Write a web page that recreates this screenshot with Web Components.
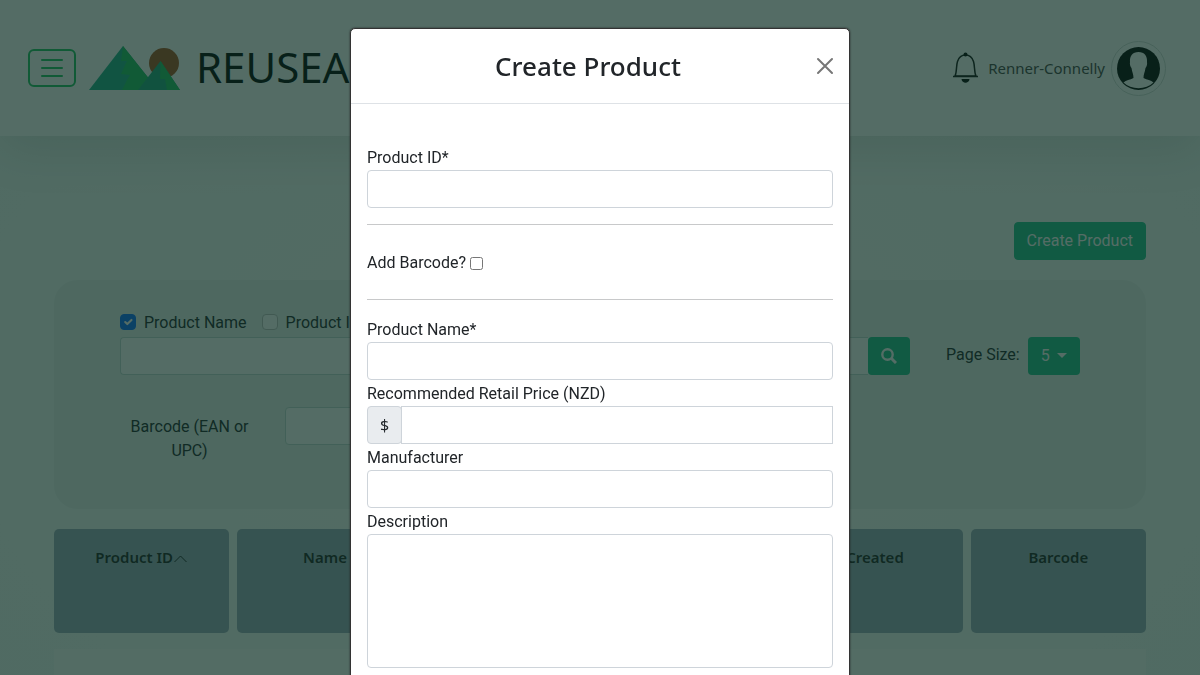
<!DOCTYPE html>
<html lang="en">
<head>
<meta charset="utf-8">
<meta name="viewport" content="width=device-width, initial-scale=1">
<title>Product catalogue</title>
<style>
body {
  margin: 0; overflow: hidden; min-height: 100vh;
  font: 16px/24px Roboto, "Liberation Sans", sans-serif; color: #212529;
  background: radial-gradient(ellipse at center, #fafdfb 0%, #f6fbf8 50%, #f0f9f6 100%);
  --heading-font: "Noto Sans", "Open Sans", sans-serif;
  --brand: #1ec18c; --outline: #1ec162; --line: #ced4da;
}
</style>
</head>
<body>
<app-header user="Renner-Connelly"></app-header>
<catalogue-page>
  <search-panel></search-panel>
  <product-table></product-table>
</catalogue-page>
<modal-dialog heading="Create Product">
  <product-form></product-form>
</modal-dialog>

<script>
const define = (name, html, setup) => {
  const template = document.createElement('template');
  template.innerHTML = '<style>*,*::before,*::after{box-sizing:border-box}:host{display:block}input,button,select,textarea{font:inherit;color:inherit;margin:0}</style>' + html;
  customElements.define(name, class extends HTMLElement {
    constructor() {
      super();
      this.attachShadow({ mode: 'open' }).append(template.content.cloneNode(true));
    }
    connectedCallback() { if (setup) setup(this, this.shadowRoot); }
  });
};

define('brand-logo', `
<style>
a { display: flex; align-items: center; gap: 16px; color: #000; text-decoration: none; font: 42px/56px var(--heading-font); }
svg { display: block; }
span { padding-bottom: 2px; }
</style>
<a href="#home">
  <svg width="91" height="46" viewBox="0 0 91 46" aria-hidden="true">
    <circle cx="75" cy="18" r="15" fill="#a8501f"/>
    <path d="M0 45 34 1 69 45Z" fill="#20b08b"/>
    <path d="M34 1 69 45H33L38 35 41 30 32 29 36 20 38 16 32 16Z" fill="#1ec162"/>
    <path d="M49 45 71.500 16 91 45Z" fill="#20a97f"/>
    <path d="M71.500 16 91 45H78L76 34 71 34Z" fill="#1ec162"/>
  </svg>
  <span>REUSEABILITY</span>
</a>`);

define('user-menu', `
<style>
:host { display: flex; align-items: center; color: #000; }
button { border: 0; padding: 0; background: none; display: block; color: #111; }
svg { display: block; }
.name { margin: 0 6px 0 9px; color: #444; text-decoration: none; font: 15px/24px var(--heading-font); }
.avatar { border: 1px solid #d3dbd8; border-radius: 50%; padding: 5px; color: #000; }
</style>
<button aria-label="Notifications">
  <svg width="27" height="32" viewBox="0 0 27 32">
    <path d="M3 24C5 20 4 14 5.500 9.500 6.800 5.500 9.500 3 13.500 3S20.200 5.500 21.500 9.500C23 14 22 20 24 24Z" fill="none" stroke="currentColor" stroke-width="1.500"/>
    <path d="M1 24.500H26" stroke="currentColor" stroke-width="1.500"/>
    <circle cx="13.500" cy="2.500" r="2"/><path d="M9.500 27H17.500C17 32 10 32 9.500 27Z"/>
  </svg>
</button>
<a class="name" href="#profile"></a>
<button class="avatar" aria-label="Account">
  <svg width="43" height="43" viewBox="0 0 43 43">
    <circle cx="21.500" cy="21.500" r="21.500"/>
    <path d="M21.500 5C15.500 5 12.500 9 13 15C12.500 17 13.500 20 14.500 21C15 25 16.500 27 16.500 31C13 33 9 33 6.500 35.500C14 43 29 43 36.500 35.500C34 33 30 33 26.500 31C26.500 27 28 25 28.500 21C29.500 20 30.500 17 30 15C30.500 9 27.500 5 21.500 5Z" fill="#fff"/>
  </svg>
</button>`, (host, root) => { root.querySelector('.name').textContent = host.getAttribute('user'); });

define('app-header', `
<style>
:host { position: relative; background: #fff; box-shadow: 0 16px 48px rgba(0,0,0,.1); }
header { display: flex; align-items: center; gap: 13px; height: 136px; padding: 0 34px 0 28px; }
.menu { width: 48px; height: 38px; padding: 0; display: grid; place-items: center; border: 2px solid var(--outline); border-radius: 6px; background: none; color: var(--outline); }
user-menu { margin-left: auto; }
</style>
<header>
  <button class="menu" aria-label="Open menu">
    <svg width="22" height="18" viewBox="0 0 22 18"><path d="M1 1H21M1 9H21M1 17H21" stroke="currentColor" stroke-width="2" stroke-linecap="round"/></svg>
  </button>
  <brand-logo></brand-logo>
  <user-menu></user-menu>
</header>`, (host, root) => { root.querySelector('user-menu').setAttribute('user', host.getAttribute('user')); root.querySelector('user-menu').connectedCallback(); });

define('catalogue-page', `
<style>
main { padding: 86px 54px 0; }
.actions { display: flex; justify-content: flex-end; margin-bottom: 20px; }
button { height: 38px; padding: 0 12px; border: 1px solid var(--brand); border-radius: 4px; background: var(--brand); color: #fff; }
</style>
<main>
  <div class="actions"><button>Create Product</button></div>
  <slot></slot>
</main>`);

define('search-panel', `
<style>
form { display: grid; grid-template-columns: 790px 1fr; column-gap: 36px; padding: 30px 66px 46px; border-radius: 24px; background: #e9f1ee; }
.fields { display: flex; gap: 15px; height: 27px; }
.fields label { display: flex; gap: 8px; height: 25px; line-height: 26px; }
input[type=checkbox] { appearance: none; width: 16px; height: 16px; margin-top: 4px; border: 1px solid #bfbfbf; border-radius: 4px; background: #fff; }
input[type=checkbox]:checked { border-color: #0d6efd; background: #0d6efd url("data:image/svg+xml,%3Csvg xmlns='http://www.w3.org/2000/svg' viewBox='0 0 20 20'%3E%3Cpath fill='none' stroke='%23fff' stroke-linecap='round' stroke-linejoin='round' stroke-width='3' d='M6 10l3 3l6-6'/%3E%3C/svg%3E") center / 100%; }
.text { width: 100%; height: 38px; padding: 6px 12px; border: 1px solid #c4d8d2; border-radius: 4px; background: #fff; }
.query { display: flex; }
.query .text { flex: 1; min-width: 0; border-right: 0; border-radius: 4px 0 0 4px; }
.query button { width: 42px; height: 38px; padding: 0; display: grid; place-items: center; border: 0; border-radius: 4px; background: var(--brand); color: #fff; }
.size { display: flex; align-items: center; gap: 8px; margin-top: 27px; height: 38px; }
.size label { height: 26px; }
.picker { position: relative; }
.picker::after { content: ""; position: absolute; right: 13px; top: 16px; border: 5px solid transparent; border-top-color: #fff; border-bottom: 0; pointer-events: none; }
select { appearance: none; width: 52px; height: 38px; padding: 0 13px; border: 0; border-radius: 4px; background: var(--brand); color: #fff; }
.barcode { display: grid; grid-template-columns: 139px 1fr 1fr; gap: 26px; margin-top: 32px; }
.barcode label { padding-top: 8px; text-align: center; }
</style>
<form>
  <div>
    <div class="fields">
      <label><input type="checkbox" checked>Product Name</label>
      <label><input type="checkbox">Product ID</label>
    </div>
    <div class="query">
      <input class="text" type="search" aria-label="Search products">
      <button type="button" aria-label="Search"><svg width="16" height="16" viewBox="0 0 16 16"><circle cx="6.500" cy="6.500" r="5.200" fill="none" stroke="currentColor" stroke-width="2.400"/><path d="M10.500 10.500 15 15" stroke="currentColor" stroke-width="3"/></svg></button>
    </div>
  </div>
  <div class="size">
    <label for="size">Page Size:</label>
    <span class="picker"><select id="size"><option>5</option><option>10</option><option>25</option></select></span>
  </div>
  <div class="barcode">
    <label for="barcode">Barcode (EAN or UPC)</label>
    <input class="text" id="barcode">
  </div>
</form>`);

define('product-table', `
<style>
:host { margin-top: 20px; }
table, thead, tbody { display: block; }
thead tr { display: grid; grid-template-columns: repeat(6, 1fr); gap: 8px; }
th { height: 104px; padding: 16px 8px; border-radius: 5px; background: #9cacbc; color: #1c1f22; font: 600 15px/24px var(--heading-font); }
svg { vertical-align: -1px; }
tbody { margin-top: 16px; min-height: 120px; background: #fff; opacity: .6; }
</style>
<table>
  <thead><tr>
    <th>Product ID<svg width="15" height="10" viewBox="0 0 15 10"><path d="M1.500 8 7.500 2 13.500 8" fill="none" stroke="currentColor"/></svg></th>
    <th>Name</th><th>RRP</th><th>Maker</th><th>Created</th><th>Barcode</th>
  </tr></thead>
  <tbody></tbody>
</table>`);

define('modal-dialog', `
<style>
:host { position: fixed; inset: 0; overflow: hidden; background: rgba(12,45,35,.7); }
dialog { position: static; width: 100%; max-width: 500px; height: auto; max-height: none; margin: 28px auto; padding: 0; border: 1px solid #333; border-radius: 5px; background: #fff; color: inherit; box-shadow: 0 0 2px #222; }
header { display: grid; grid-template-columns: 8px 1fr 32px; align-items: center; padding: 16px 8px; border-bottom: 1px solid #dee2e6; }
h2 { grid-column: 2; margin: 0; text-align: center; font: 500 26px/42px var(--heading-font); }
button { align-self: start; width: 32px; height: 42px; padding: 0; display: grid; place-items: center; border: 0; background: none; color: #777; }
section { padding: 16px; }
</style>
<dialog open aria-labelledby="title">
  <header><h2 id="title"></h2>
    <button aria-label="Close"><svg width="18" height="18" viewBox="0 0 18 18"><path d="M2 2 16 16M16 2 2 16" stroke="currentColor" stroke-width="2" stroke-linecap="round"/></svg></button>
  </header>
  <section><slot></slot></section>
</dialog>`, (host, root) => { root.querySelector('h2').textContent = host.getAttribute('heading'); });

define('form-field', `
<style>
label { display: block; padding-top: 2px; }
.control { display: flex; }
.prefix { display: grid; place-items: center; width: 35px; border: 1px solid var(--line); border-radius: 4px; background: #e9ecef; font-family: var(--heading-font); }
.prefix:empty { display: none; }
input, textarea { display: block; flex: 1; min-width: 0; height: 38px; padding: 6px 12px; border: 1px solid var(--line); border-radius: 4px; background: #fff; }
textarea { height: 134px; resize: none; }
.prefix:not(:empty) + input { margin-left: -1px; border-radius: 0; }
</style>
<label for="control"></label>
<div class="control"><span class="prefix"></span></div>`, (host, root) => {
  root.querySelector('label').textContent = host.getAttribute('label');
  root.querySelector('.prefix').textContent = host.getAttribute('prefix-text') || '';
  const control = document.createElement(host.hasAttribute('multiline') ? 'textarea' : 'input');
  control.id = 'control';
  root.querySelector('.control').append(control);
});

define('product-form', `
<style>
form { padding-top: 24px; }
hr { height: 1px; margin: 16px 0; border: 0; background: #c8c9ca; }
.toggle { display: flex; align-items: center; gap: 4px; height: 42px; padding-top: 2px; }
.toggle input { width: 13px; height: 13px; }
</style>
<form>
  <form-field label="Product ID*"></form-field>
  <hr>
  <label class="toggle">Add Barcode? <input type="checkbox"></label>
  <hr>
  <form-field label="Product Name*"></form-field>
  <form-field label="Recommended Retail Price (NZD)" prefix-text="$"></form-field>
  <form-field label="Manufacturer"></form-field>
  <form-field label="Description" multiline></form-field>
</form>`);
</script>
</body>
</html>
